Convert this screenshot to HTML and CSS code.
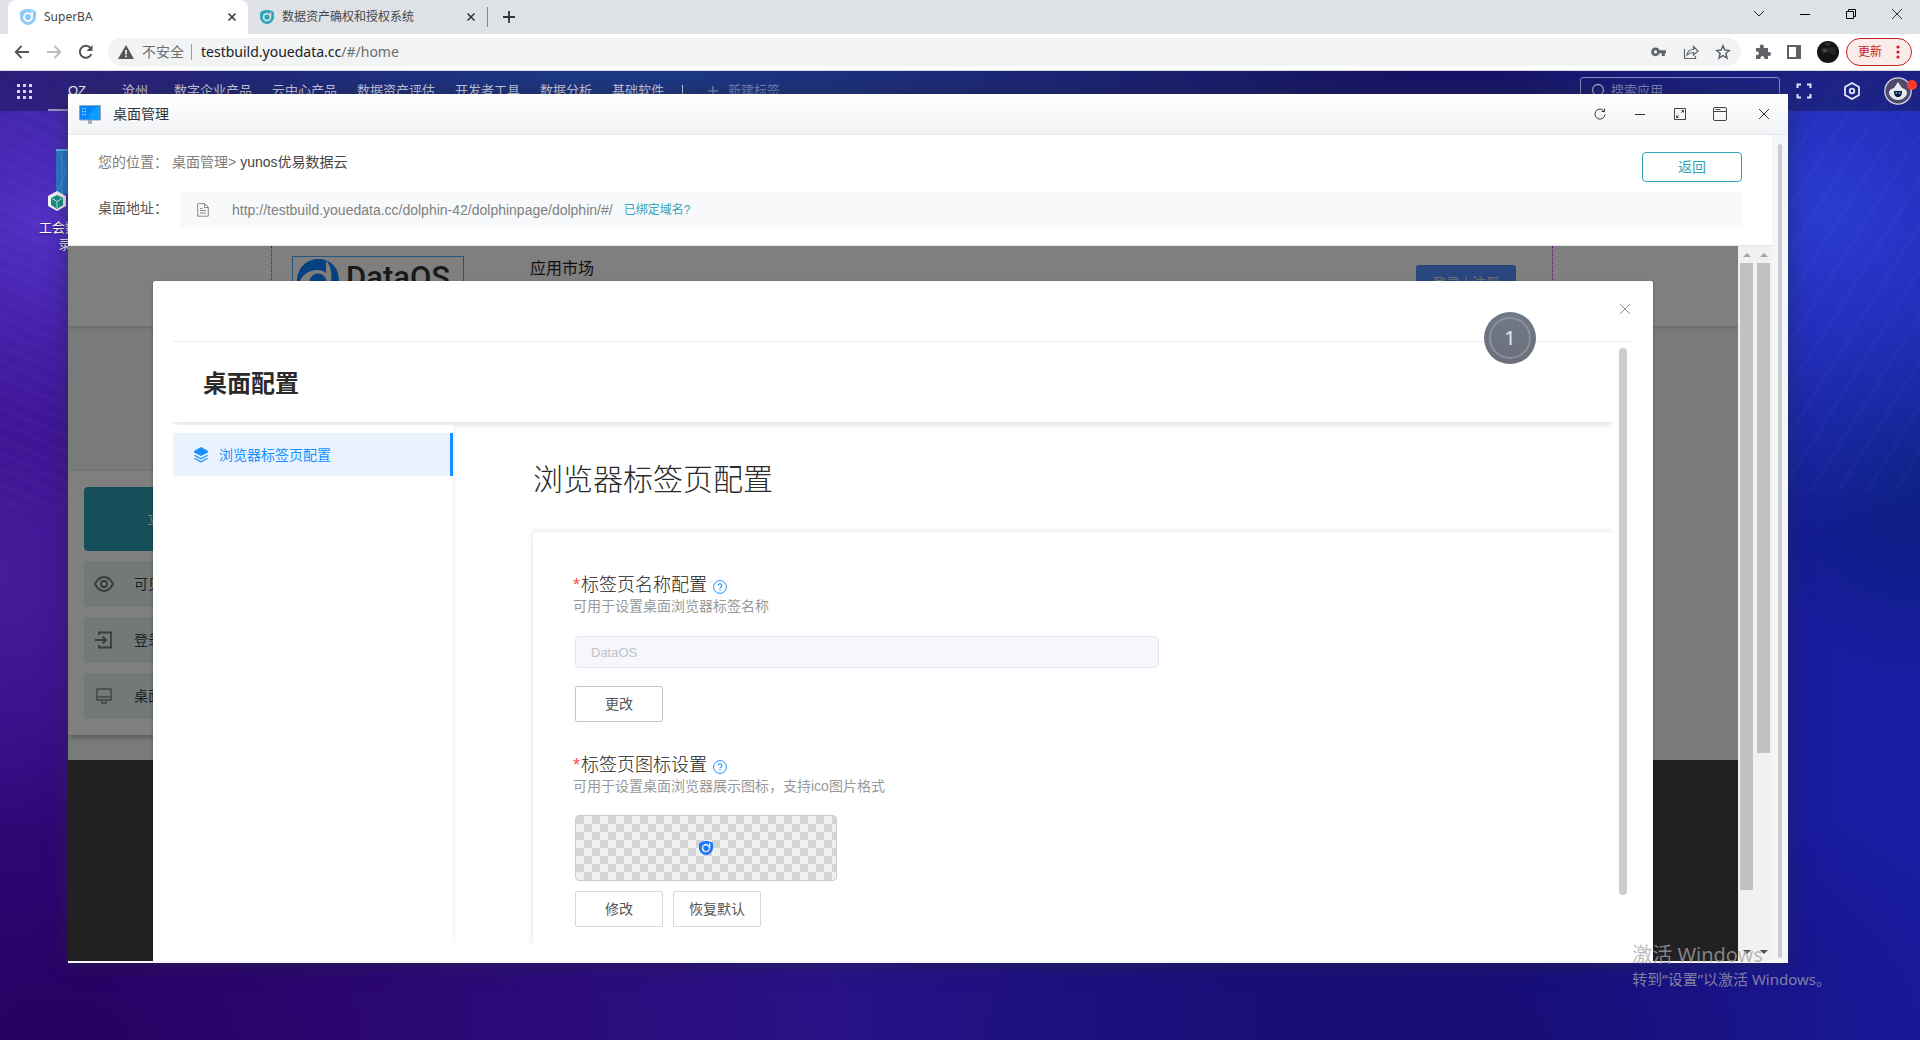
FILE: index.html
```html
<!DOCTYPE html>
<html lang="zh-CN">
<head>
<meta charset="utf-8">
<title>SuperBA</title>
<link rel="stylesheet" href="styles.css">
</head>
<body>
<svg class="defs" width="0" height="0" aria-hidden="true">
  <symbol id="x" viewBox="0 0 12 12"><path d="M1 1l10 10M11 1L1 11" fill="none" stroke="currentColor"/></symbol>
  <symbol id="brand" viewBox="0 0 16 16"><path fill="currentColor" fill-rule="evenodd" d="M8 0c3 0 8 1.500 8 3V8c0 4-4 8-8 8S0 12 0 8V4C0 1.500 5 0 8 0zM8 3.200A4.900 4.900 0 1 0 12.900 8V2.800l-1.500-.6v2.600A4.900 4.900 0 0 0 8 3.200z"/><circle cx="8" cy="8" r="3" fill="currentColor"/></symbol>
  <symbol id="help" viewBox="0 0 14 14"><circle cx="7" cy="7" r="6.400" fill="none" stroke="currentColor"/><path d="M5.200 5.600a1.800 1.800 0 1 1 2.600 1.600c-.6.300-.8.600-.8 1.200M7 9.600v1.200" fill="none" stroke="currentColor" stroke-width="1.100"/></symbol>
</svg>

<header class="chrome">
  <div class="tabs">
    <div class="tab tab-active">
      <svg class="fav fav-light" width="16" height="16"><use href="#brand"/></svg>
      <span class="tab-name">SuperBA</span>
      <button class="icon-btn" aria-label="关闭标签页"><svg width="8" height="8" viewBox="0 0 8 8"><path d="M.5.5l7 7M7.500.5l-7 7" stroke="#333" stroke-width="1.500"/></svg></button>
    </div>
    <div class="tab">
      <svg class="fav fav-teal" width="14" height="14"><use href="#brand"/></svg>
      <span class="tab-name">数据资产确权和授权系统</span>
      <button class="icon-btn" aria-label="关闭标签页"><svg width="8" height="8" viewBox="0 0 8 8"><path d="M.5.5l7 7M7.500.5l-7 7" stroke="#333" stroke-width="1.500"/></svg></button>
    </div>
    <span class="tab-sep"></span>
    <button class="icon-btn new-tab" aria-label="新标签页"><svg width="12" height="12" viewBox="0 0 12 12"><path d="M6 0v12M0 6h12" stroke="#333" stroke-width="1.800"/></svg></button>
    <div class="win-ctrl">
      <button class="icon-btn" aria-label="搜索标签页"><svg width="12" height="8" viewBox="0 0 12 8"><path d="M1 1l5 5 5-5" fill="none" stroke="#222"/></svg></button>
      <button class="icon-btn" aria-label="最小化"><svg width="10" height="10" viewBox="0 0 10 10"><path d="M0 5.500h10" stroke="#000"/></svg></button>
      <button class="icon-btn" aria-label="还原"><svg width="10" height="10" viewBox="0 0 10 10"><path d="M.5 2.500h7v7h-7zM2.500 2.500v-2h7v7h-2" fill="none" stroke="#000"/></svg></button>
      <button class="icon-btn" aria-label="关闭"><svg width="12" height="12"><use href="#x"/></svg></button>
    </div>
  </div>
  <div class="toolbar">
    <button class="icon-btn" aria-label="后退"><svg width="16" height="14" viewBox="0 0 16 14"><path d="M15 7H2M7.500 1L1.700 7l5.800 6" fill="none" stroke="#555" stroke-width="1.800"/></svg></button>
    <button class="icon-btn" aria-label="前进"><svg width="16" height="14" viewBox="0 0 16 14"><path d="M1 7h13M8.500 1l5.800 6-5.800 6" fill="none" stroke="#bbb" stroke-width="1.800"/></svg></button>
    <button class="icon-btn" aria-label="刷新"><svg width="16" height="16" viewBox="0 0 16 16"><path d="M13.400 10.200A6 6 0 1 1 12.500 4" fill="none" stroke="#555" stroke-width="2"/><path d="M14.500 1v6h-6z" fill="#555"/></svg></button>
    <div class="omnibox">
      <svg width="16" height="14" viewBox="0 0 16 14"><path d="M8 0l8 14H0z" fill="#555"/><path d="M8 5v4.500M8 10.500v1.700" stroke="#fff" stroke-width="1.600"/></svg>
      <span class="insecure">不安全</span>
      <span class="omni-sep"></span>
      <span class="omni-url">testbuild.youedata.cc<span class="omni-path">/#/home</span></span>
      <div class="omni-icons">
        <svg width="16" height="16" viewBox="0 0 16 16"><path fill="#5f6368" fill-rule="evenodd" d="M4.500 3.500a4.300 4.300 0 0 1 4.100 2.800H15v3h-1.200V12h-3V9.300H8.600A4.300 4.300 0 1 1 4.500 3.500zm0 2.800a1.600 1.600 0 1 0 0 3.200 1.600 1.600 0 0 0 0-3.200z"/></svg>
        <svg width="16" height="16" viewBox="0 0 16 16"><path d="M1.500 5v9.500h11V12M4 11c.5-4 3-5.500 6.500-5.500v-3L15 7l-4.500 4.200V8.500C8 8.500 6 9 4 11z" fill="none" stroke="#5f6368" stroke-width="1.200"/></svg>
        <svg width="16" height="16" viewBox="0 0 16 16"><path d="M8 1.800l1.800 4.300 4.600.4-3.500 3 1.100 4.600L8 11.600l-4 2.500 1.100-4.600-3.500-3 4.600-.4z" fill="none" stroke="#5f6368" stroke-width="1.500"/></svg>
      </div>
    </div>
    <svg class="tool" width="16" height="16" viewBox="0 0 16 16"><path fill="#5f6368" d="M1 4h4c-.7-2 .3-3.500 1.800-3.500S9.300 2 8.700 4H13v4c2-.5 3 .6 3 1.900s-1 2.400-3 1.900V15H9.300c.3-2-.7-3-1.900-3s-2.200 1-1.900 3H1v-4c2 .3 2.800-.7 2.800-1.800S3 7.300 1 7.700z"/></svg>
    <svg class="tool" width="14" height="14" viewBox="0 0 14 14"><path fill="#5f6368" fill-rule="evenodd" d="M0 0h14v14H0zM2 2v10h7V2z"/></svg>
    <svg class="tool" width="22" height="22" viewBox="0 0 22 22"><circle cx="11" cy="11" r="11" fill="#151517"/><path d="M4 7l14-1 1 7-3 1-4-3-6 2z" fill="#24272a"/><path d="M6 8h4v3H6z" fill="#4b4b4b"/><path d="M7 2h7l-3 3z" fill="#433"/></svg>
    <button class="update">更新<svg width="4" height="14" viewBox="0 0 4 14"><g fill="#c5221f"><circle cx="2" cy="2" r="1.600"/><circle cx="2" cy="7" r="1.600"/><circle cx="2" cy="12" r="1.600"/></g></svg></button>
  </div>
</header>

<main class="desktop">
  <nav class="topbar">
    <button class="icon-btn apps" aria-label="应用"><svg width="15" height="15" viewBox="0 0 15 15" fill="#d6d4ec"><path d="M0 0h3v3H0zM6 0h3v3H6zM12 0h3v3h-3zM0 6h3v3H0zM6 6h3v3H6zM12 6h3v3h-3zM0 12h3v3H0zM6 12h3v3H6zM12 12h3v3h-3z"/></svg></button>
    <a href="#" class="nav nav-on">OZ</a>
    <a href="#" class="nav">沧州</a>
    <a href="#" class="nav">数字企业产品</a>
    <a href="#" class="nav">云中心产品</a>
    <a href="#" class="nav">数据资产评估</a>
    <a href="#" class="nav">开发者工具</a>
    <a href="#" class="nav">数据分析</a>
    <a href="#" class="nav">基础软件</a>
    <span class="nav-sep"></span>
    <button class="add-tag"><svg width="10" height="10" viewBox="0 0 10 10"><path d="M5 0v10M0 5h10" stroke="currentColor" stroke-width="1.500"/></svg>新建标签</button>
    <div class="search">
      <svg width="14" height="16" viewBox="0 0 14 16"><circle cx="7" cy="7" r="5.500" fill="none" stroke="#a6aacf" stroke-width="1.300"/><path d="M10 11l3 4" stroke="#a6aacf"/></svg>
      <input type="text" placeholder="搜索应用" aria-label="搜索应用">
    </div>
    <button class="icon-btn" aria-label="全屏"><svg width="16" height="16" viewBox="0 0 16 16"><path d="M1.500 5V1.500H5M11 1.500h3.500V5M14.500 11v3.500H11M5 14.500H1.500V11" fill="none" stroke="#e4e6f5" stroke-width="2"/></svg></button>
    <button class="icon-btn" aria-label="设置"><svg width="16" height="18" viewBox="0 0 16 18"><path d="M8 1l7 4v8l-7 4-7-4V5z" fill="none" stroke="#e4e6f5" stroke-width="1.800"/><circle cx="8" cy="9" r="2.300" fill="none" stroke="#e4e6f5" stroke-width="1.800"/></svg></button>
    <button class="icon-btn user" aria-label="用户"><svg width="28" height="28" viewBox="0 0 28 28"><circle cx="14" cy="14" r="13.200" fill="#4f4a6b" stroke="#d4d6e6" stroke-width="1.300"/><path d="M14 5l4 6c4 1 5 3 5 5s-3 7-9 7-9-5-9-7 1-4 5-5z" fill="#e8e9f0"/><path d="M10 14h8c0 4.500-1.500 6-4 6s-4-1.500-4-6z" fill="#12183c"/><circle cx="12.500" cy="16" r="1" fill="#27b5cf"/><circle cx="15.500" cy="16" r="1" fill="#27b5cf"/></svg><span class="dot"></span></button>
  </nav>

  <div class="shortcut">
    <svg width="30" height="62" viewBox="0 0 30 62"><path d="M8 0h22v45H8z" fill="#2678cb"/><path d="M8 0h22v2H8z" fill="#5cb6ea"/><path d="M10 4l8 18-8 20M14 0v45" stroke="#56a4dd" stroke-width=".6" fill="none"/><path d="M9 42l9 5v10l-9 5-9-5V47z" fill="#f1f6f6"/><path d="M9 46l6 3v7l-6 4-6-4v-7z" fill="#188f82"/><path d="M4 49.500l5 3 5-3M9 52.500V59" stroke="#bfe8df" fill="none"/></svg>
    <span>工会数据<br>录</span>
  </div>

  <section class="window">
    <header class="titlebar">
      <svg width="22" height="19" viewBox="0 0 22 19"><path d="M9 15h4v4H9z" fill="#a7adb5"/><rect width="22" height="15.500" rx="1" fill="#8fa6bd"/><rect x="1" y="1" width="20" height="13.500" fill="#0786fb"/><path d="M21 1v13.500H10C10 8 14 3 21 1z" fill="#0c9dff"/><path d="M3 3h1.300v1.300H3zM5.500 3h1.300v1.300H5.500zM3 6h1.300v1.300H3zM5.500 6h1.300v1.300H5.500zM3 9h1.300v1.300H3zM5.500 9h1.300v1.300H5.500z" fill="#9fe0ff"/></svg>
      <h1 class="win-title">桌面管理</h1>
      <div class="win-tools">
        <button class="icon-btn" aria-label="刷新"><svg width="12" height="12" viewBox="0 0 12 12"><path d="M11 6.500A5 5 0 1 1 9.500 2.500M10.500.5v3h-3" fill="none" stroke="#333"/></svg></button>
        <button class="icon-btn" aria-label="最小化"><svg width="10" height="10" viewBox="0 0 10 10"><path d="M0 5.500h10" stroke="#333"/></svg></button>
        <button class="icon-btn" aria-label="最大化"><svg width="12" height="12" viewBox="0 0 12 12"><path d="M.5.5h11v11H.5zM7.500 2.500h2v2M4.500 9.500h-2v-2M9.500 2.500L7.300 4.700M2.500 9.500l2.200-2.200" fill="none" stroke="#444"/></svg></button>
        <button class="icon-btn" aria-label="窗口"><svg width="14" height="14" viewBox="0 0 14 14"><rect x=".5" y=".5" width="13" height="13" rx="1.500" fill="none" stroke="#444"/><path d="M.5 4.500h13M2.500 2.500h5" stroke="#444"/></svg></button>
        <button class="icon-btn" aria-label="关闭"><svg width="12" height="12"><use href="#x"/></svg></button>
      </div>
    </header>

    <div class="win-body">
      <div class="win-main">
        <div class="info">
          <div class="crumb">
            <span class="muted">您的位置：</span><a href="#" class="muted">桌面管理&gt;</a><span class="here">yunos优易数据云</span>
            <button class="back">返回</button>
          </div>
          <div class="addr">
            <span class="addr-label">桌面地址：</span>
            <div class="addr-box">
              <svg width="12" height="14" viewBox="0 0 12 14"><path d="M.7.7h7l3.600 3.500v9H.7zM7.500.7v3.800h3.800M3 5.500h2.500M3 7.500h6M3 10h6" fill="none" stroke="#888"/></svg>
              <span class="addr-url">http://testbuild.youedata.cc/dolphin-42/dolphinpage/dolphin/#/</span>
              <a href="#" class="bound">已绑定域名?</a>
            </div>
          </div>
        </div>

        <div class="frame">
          <div class="preview">
            <div class="site-head">
              <div class="site-head-in">
                <div class="logo">
                  <svg width="44" height="44" viewBox="0 0 44 44"><path fill="#0a84ff" fill-rule="evenodd" d="M22 0c12 0 21 8 21 21s-9 23-21 23S1 34 1 22 10 0 22 0zM3 24c3-8 10-13 18-13 4 0 7 1 9 3V2c7 5 9 27-5 36-8 5-20-2-20-12z"/><circle cx="22" cy="23" r="8.500" fill="#0a84ff"/></svg>
                  <span>DataOS</span>
                </div>
                <a href="#" class="market">应用市场</a>
                <button class="login">登录 | 注册</button>
              </div>
            </div>
            <div class="panel">
              <button class="publish">立即发布</button>
              <a href="#" class="opt"><svg width="20" height="20" viewBox="0 0 20 20"><path d="M1 10c2-4 5.500-7 9-7s7 3 9 7c-2 4-5.500 7-9 7s-7-3-9-7z" fill="none" stroke="#777" stroke-width="1.800"/><circle cx="10" cy="10" r="3" fill="none" stroke="#777" stroke-width="1.800"/></svg>可见范围</a>
              <a href="#" class="opt"><svg width="20" height="20" viewBox="0 0 20 20"><path d="M5 5V2.500h12v15H5V15M1 10h11M8.500 6.500L12 10l-3.500 3.500" fill="none" stroke="#777" stroke-width="1.800"/></svg>登录设置</a>
              <a href="#" class="opt"><svg width="20" height="20" viewBox="0 0 20 20"><path d="M3 3h14v11H3zM3 11h14M8 14v3h4v-3" fill="none" stroke="#888" stroke-width="1.500"/></svg>桌面配置</a>
            </div>
            <div class="site-foot"></div>
            <div class="mask"></div>

            <div class="modal" role="dialog" aria-label="桌面配置">
              <div class="modal-head"><button class="icon-btn modal-x" aria-label="关闭"><svg width="12" height="12"><use href="#x"/></svg></button></div>
              <div class="modal-body">
                <div class="config">
                  <h2 class="config-title">桌面配置</h2>
                  <div class="config-row">
                    <aside class="side">
                      <a href="#" class="side-item"><svg width="14" height="16" viewBox="0 0 14 16"><path d="M7 0l7 4v1.500L7 9 0 5.500V4z" fill="#1890ff"/><path d="M.5 8.300L7 11.800l6.500-3.500M.5 11.200L7 14.700l6.500-3.500" fill="none" stroke="#1890ff" stroke-width="1.300"/></svg>浏览器标签页配置</a>
                    </aside>
                    <div class="pane">
                      <h3 class="pane-title">浏览器标签页配置</h3>
                      <form class="card">
                        <label class="field" for="tabname"><span class="star">*</span>标签页名称配置<svg width="14" height="14"><use href="#help"/></svg></label>
                        <p class="hint">可用于设置桌面浏览器标签名称</p>
                        <input class="text" id="tabname" type="text" value="DataOS" disabled>
                        <div class="btns btns-first"><button type="button" class="btn btn-dark">更改</button></div>
                        <div class="field field-next"><span class="star">*</span>标签页图标设置<svg width="14" height="14"><use href="#help"/></svg></div>
                        <p class="hint">可用于设置桌面浏览器展示图标，支持ico图片格式</p>
                        <div class="checker"><svg width="14" height="14"><use href="#brand"/></svg></div>
                        <div class="btns"><button type="button" class="btn">修改</button><button type="button" class="btn">恢复默认</button></div>
                      </form>
                    </div>
                  </div>
                </div>
                <div class="modal-thumb"></div>
              </div>
              <span class="count">1</span>
            </div>
          </div>
          <div class="scroll"><i class="up"></i><div class="track"><b class="thumb thumb-long"></b></div><i class="down"></i></div>
          <div class="scroll"><i class="up"></i><div class="track"><b class="thumb thumb-short"></b></div><i class="down"></i></div>
        </div>
      </div>
      <div class="win-scroll"></div>
    </div>
  </section>

  <div class="activate"><p class="act-big">激活 Windows</p><p class="act-small">转到“设置”以激活 Windows。</p></div>
</main>
</body>
</html>
```

FILE: styles.css
```css
* { box-sizing: border-box; }
body {
  margin: 0;
  height: 100vh;
  display: flex;
  flex-direction: column;
  overflow: hidden;
  font: 14px/20px "Liberation Sans", "Noto Sans CJK SC", sans-serif;
  color: #333;
}
h1, h2, h3, p { margin: 0; font-weight: 400; }
a { text-decoration: none; color: inherit; }
button, input { font: inherit; color: inherit; }
svg { display: block; flex: none; }
.defs { position: absolute; }
.icon-btn {
  border: 0; padding: 0; background: none;
  display: flex; align-items: center; justify-content: center;
  width: 16px; height: 16px; flex: none;
}

/* browser frame */
.chrome { font-family: "Noto Sans", "Noto Sans CJK SC", sans-serif; flex: none; }
.tabs { display: flex; height: 34px; background: #dee1e6; padding-left: 8px; }
.tab { display: flex; align-items: center; width: 239px; padding: 0 8px 0 12px; font-size: 12px; color: #45474a; }
.tab-active { background: #fff; border-radius: 8px 8px 0 0; width: 240px; }
.tab-name { flex: 1; margin-left: 8px; }
.fav-light { color: #8ccbf5; }
.fav-teal { color: #2ba5b9; }
.tab-sep { width: 1px; height: 20px; margin-top: 7px; background: #80868b; }
.new-tab { margin: 9px 0 0 13px; }
.win-ctrl { display: flex; gap: 30px; margin: 6px 15px 0 auto; }
.toolbar { display: flex; align-items: center; height: 37px; padding: 0 8px 0 14px; border-bottom: 1px solid #d6dadd; background: #fff; }
.toolbar > .icon-btn { margin-right: 16px; }
.omnibox { flex: 1; display: flex; align-items: center; height: 28px; margin-left: -2px; padding: 0 10px; border-radius: 14px; background: #f1f3f4; font-size: 14px; }
.insecure { margin-left: 8px; color: #6a6d70; }
.omni-sep { width: 1px; height: 16px; margin: 0 9px 0 7px; background: #999c9f; }
.omni-url { color: #202124; }
.omni-path { color: #6a6d70; }
.omni-icons { display: flex; gap: 16px; margin-left: auto; }
.tool { margin-left: 16px; }
.omnibox + .tool { margin-left: 14px; }
.update { display: flex; align-items: center; gap: 14px; height: 28px; padding: 0 11px; margin-left: 7px; border: 1px solid #c5221f; border-radius: 14px; background: #fbecec; color: #c5221f; font-size: 12px; }

/* desktop */
.desktop {
  flex: 1; position: relative; overflow: hidden;
  background:
    repeating-linear-gradient(24deg, rgba(255,255,255,0) 0 8px, rgba(170,150,255,.04) 11px, rgba(255,255,255,0) 14px) 0 0 / 130px 440px no-repeat,
    repeating-linear-gradient(-58deg, rgba(255,255,255,0) 0 18px, rgba(150,170,255,.04) 21px, rgba(255,255,255,0) 24px) 100% 0 / 160px 420px no-repeat,
    radial-gradient(260px 220px at 40px 150px, #5230c4 0%, rgba(82,48,196,0) 100%),
    radial-gradient(200px 260px at 0 500px, #451c9a 0%, rgba(69,28,154,0) 100%),
    radial-gradient(360px 320px at 1830px 140px, #2a3bd0 0%, rgba(42,59,208,0) 100%),
    radial-gradient(200px 200px at 1920px 400px, #0a1f7c 0%, rgba(10,31,124,0) 100%),
    radial-gradient(800px 160px at 620px 0, #2258c0 0%, rgba(34,88,192,0) 100%),
    radial-gradient(800px 480px at 60px 100%, #260060 0%, rgba(38,0,96,0) 100%),
    radial-gradient(600px 300px at 1420px 100%, #180c72 0%, rgba(24,12,114,0) 100%),
    linear-gradient(90deg, #3a0f90 0, #2c1288 36%, #1b1284 68%, #181ca0 96%);
}
.topbar { display: flex; align-items: center; height: 40px; padding: 0 8px 0 16px; background: rgba(18,18,50,.4); color: #d3d5ea; font-size: 13px; }
.apps { margin-right: 16px; }
.nav { min-width: 58px; padding: 0 10px; line-height: 40px; text-align: center; white-space: nowrap; }
.nav-on { height: 40px; color: #fff; border-bottom: 2px solid #9a93c4; }
.nav-sep { width: 1px; height: 12px; margin: 0 20px 0 8px; background: #d3d5ea; }
.add-tag { display: flex; align-items: center; gap: 10px; border: 0; padding: 0 5px; background: none; color: #7b87bd; white-space: nowrap; }
.search { display: flex; align-items: center; gap: 6px; width: 200px; height: 28px; margin-left: auto; margin-right: 16px; padding: 0 10px; border: 1px solid #8b8fc4; border-radius: 3px; }
.search input { width: 100%; min-width: 0; border: 0; padding: 0; background: none; outline: 0; }
.search input::placeholder { color: #8088bf; opacity: 1; }
.topbar .icon-btn + .icon-btn { margin-left: 32px; }
.topbar .user { position: relative; width: 28px; height: 28px; }
.topbar .icon-btn + .user { margin-left: 24px; }
.dot { position: absolute; right: -5px; top: 3px; width: 10px; height: 10px; border-radius: 5px; background: #ff3b30; }

.shortcut { position: absolute; left: 38px; top: 78px; width: 54px; color: #fff; font-size: 13px; line-height: 17px; text-align: center; text-shadow: 0 1px 2px rgba(0,0,0,.5); }
.shortcut svg { margin: 0 0 8px 10px; }

/* app window */
.window {
  position: absolute; left: 68px; right: 132px; top: 23px; bottom: 77px;
  display: flex; flex-direction: column;
  background: #f3f7f9; box-shadow: 0 0 18px rgba(40,44,60,.6);
}
.titlebar { display: flex; align-items: center; flex: none; height: 41px; padding: 0 16px 0 11px; background: linear-gradient(#fff, #f1f3f5); border-bottom: 1px solid #e2e8ed; }
.win-title { margin-left: 12px; font-size: 14px; line-height: 20px; }
.win-tools { display: flex; gap: 24px; margin-left: auto; }
.win-tools .icon-btn:last-child { margin-left: 4px; }
.win-body { flex: 1; display: flex; min-height: 0; padding-bottom: 2px; }
.win-main { flex: 1; display: flex; flex-direction: column; min-width: 0; }
.win-scroll { width: 4px; margin: 9px 6px 3px; border-radius: 2px; background: #ccc; }
.info { flex: none; height: 111px; padding: 17px 30px 0; background: #fff; border-bottom: 1px solid #e5e8e8; }
.crumb { display: flex; align-items: center; height: 30px; }
.crumb > :first-child { width: 74px; }
.here { margin-left: 4px; color: #444; }
.muted { color: #7d7d7d; }
.crumb span.here, .crumb .muted { margin-top: -10px; }
.back { width: 100px; height: 30px; margin-left: auto; border: 1px solid #2fa5b9; border-radius: 4px; background: #fff; color: #2fa5b9; }
.addr { display: flex; margin-top: 10px; }
.addr-label { width: 82px; padding-top: 6px; color: #555; }
.addr-box { flex: 1; display: flex; align-items: center; height: 35px; padding-left: 17px; background: #f7f9fb; }
.addr-url { margin-left: 23px; color: #808080; }
.bound { margin-left: 11px; font-size: 12px; color: #2fa5b9; }

/* embedded site */
.frame { flex: 1; display: flex; min-height: 0; }
.preview { flex: 1; position: relative; display: flex; flex-direction: column; overflow: hidden; min-width: 0; background: #f3f7f4; }
.site-head { flex: none; height: 80px; padding: 0 185px 0 203px; background: #fff; box-shadow: 0 1px 5px rgba(0,0,0,.2); }
.site-head-in { display: flex; align-items: flex-start; height: 80px; border: dotted #c81fe0; border-width: 0 1px; padding: 10px 36px 0 20px; }
.logo { display: flex; width: 172px; height: 60px; padding: 2px 3px; border: 1px solid #4aa8ff; font: 500 31px/38px "Roboto", sans-serif; gap: 6px; color: #333; }
.market { margin-left: 66px; font-size: 16px; line-height: 26px; color: #222; }
.login { width: 100px; height: 36px; margin: 9px 0 0 auto; border: 0; border-radius: 3px; background: #548cff; color: #ddd; }
.panel { display: flex; flex-direction: column; gap: 10px; width: 214px; height: 264px; margin-top: 145px; padding: 16px; background: #fff; box-shadow: 0 2px 6px rgba(0,0,0,.3); }
.publish { height: 64px; border: 0; border-radius: 4px; background: #2a9eb2; color: #fff; }
.opt { display: flex; align-items: center; gap: 20px; height: 46px; padding-left: 10px; border-radius: 4px; background: #e6f2f1; color: #344050; }
.site-foot { flex: 1; margin-top: 25px; background: #424242; }
.mask { position: absolute; inset: 0; background: rgba(0,0,0,.5); }

.scroll { display: flex; flex-direction: column; align-items: center; width: 17px; background: #f1f1f1; }
.up, .down { flex: none; width: 8px; height: 8px; border: 4px solid transparent; }
.up { margin: 3px 0 6px; border-bottom-color: #a3a3a3; }
.down { margin: 6px 0 3px; border-top-color: #505050; }
.track { flex: 1; width: 13px; min-height: 0; }
.thumb { display: block; background: #c1c1c1; }
.thumb-long { height: 92%; }
.thumb-short { height: 72%; }

/* dialog */
.modal { position: absolute; inset: 35px 85px 0; display: flex; flex-direction: column; padding: 0 20px 18px; background: #fff; border-radius: 2px 2px 0 0; box-shadow: 0 1px 3px rgba(0,0,0,.3); }
.modal-head { display: flex; justify-content: flex-end; flex: none; height: 61px; padding-top: 20px; border-bottom: 1px solid #ebeef0; }
.modal-x { color: #909399; }
.modal-body { flex: 1; display: flex; min-height: 0; }
.modal-thumb { width: 8px; margin: 6px 6px 48px; border-radius: 4px; background: #ccc; }
.config { flex: 1; display: flex; flex-direction: column; min-width: 0; overflow: hidden; }
.config-title { flex: none; height: 80px; padding-left: 30px; font-size: 24px; line-height: 84px; font-weight: 700; color: #2b2b2b; box-shadow: 0 2px 7px rgba(0,0,0,.14); }
.config-row { flex: 1; display: flex; min-height: 0; }
.side { width: 280px; margin-top: 3px; padding-top: 8px; background: #fff; box-shadow: 0 4px 6px rgba(0,0,0,.09); }
.side-item { display: flex; align-items: center; gap: 11px; height: 43px; padding-left: 21px; border-right: 3px solid #1890ff; background: #e8f3fe; color: #1890ff; }
.pane { flex: 1; padding: 36px 0 0 80px; }
.pane-title { font-size: 30px; font-weight: 300; line-height: 44px; margin-bottom: 30px; color: #2b2b2b; }
.card { height: 430px; padding: 40px; border-radius: 4px; box-shadow: 0 0 6px rgba(0,0,0,.14); }
.field { display: flex; align-items: center; height: 26px; font-size: 18px; font-weight: 300; color: #222; }
.field svg { margin: 4px 0 0 6px; color: #1890ff; }
.field-next { margin-top: 30px; }
.star { color: #ff4d4f; width: 8px; }
.hint { line-height: 17px; color: #999; }
.text { display: block; width: 584px; max-width: 100%; height: 32px; margin: 21px 2px 0; padding: 0 15px; border: 1px solid #e2e5ef; border-radius: 4px; background: #f5f7fa; color: #c0c4cc; font-size: 13px; }
.btns { display: flex; gap: 10px; margin: 10px 2px 0; }
.btns-first { margin-top: 18px; }
.btn { width: 88px; height: 36px; padding: 0; border: 1px solid #d9d9d9; border-radius: 2px; background: #fff; color: #555; }
.btn-dark { border-color: #c6c6c6; }
.checker { display: flex; align-items: center; justify-content: center; width: 262px; height: 66px; margin: 20px 2px 0; border: 1px solid #ccc; border-radius: 4px; color: #1677ff; background: conic-gradient(#f0f0f0 25%, #d4d4d4 0 50%, #f0f0f0 0 75%, #d4d4d4 0) 0 0 / 16px 16px; }
.count { position: absolute; right: 117px; top: 31px; width: 52px; height: 52px; border-radius: 50%; background: linear-gradient(rgba(100,112,126,.93), rgba(100,102,115,.95)); color: #e4e7ec; font: 20px/52px "Noto Sans", sans-serif; text-align: center; }
.count::before { content: ""; position: absolute; inset: 5px; border: 2px solid #8b909b; border-radius: 50%; }

.activate { position: absolute; right: 89px; bottom: 50px; color: rgba(165,165,170,.75); font-family: "Noto Sans", "Noto Sans CJK SC", sans-serif; white-space: nowrap; }
.act-big { font-size: 20px; line-height: 26px; }
.act-small { font-size: 15px; line-height: 22px; }
```
